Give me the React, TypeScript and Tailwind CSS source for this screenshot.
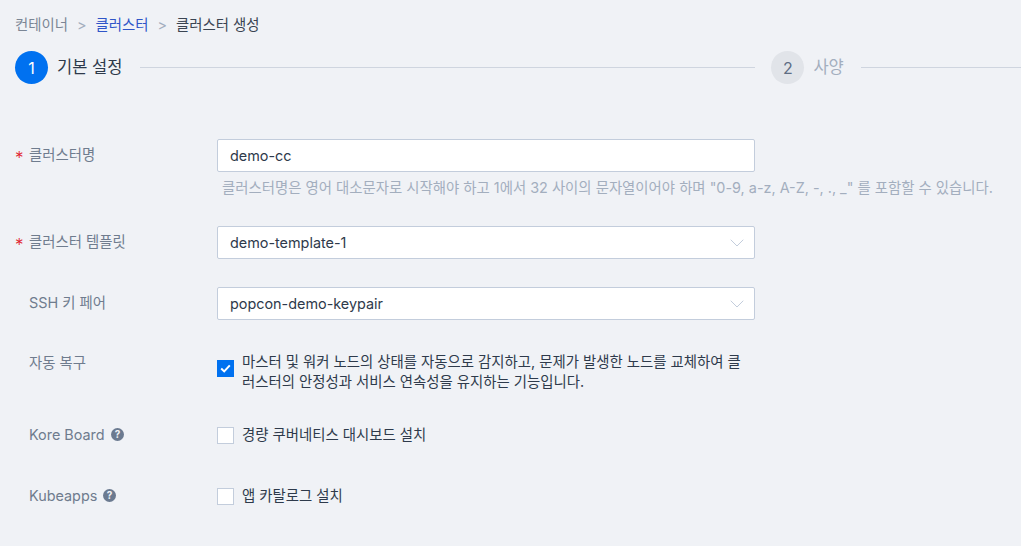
import { ChevronDown } from 'lucide-react';

const font = '[font-family:Inter,"Noto_Sans_CJK_KR",sans-serif]';

function HelpIcon() {
  return (
    <svg width="13" height="13" viewBox="0 0 13 13" className="shrink-0 -mt-[1px]">
      <circle cx="6.5" cy="6.5" r="6.5" fill="#6b7a90" />
      <text x="6.5" y="10" textAnchor="middle" fontSize="10" fontWeight="700" fill="#f0f2f6" fontFamily="Inter">
        ?
      </text>
    </svg>
  );
}

function Required() {
  return <span className="absolute left-[15px] top-[9px] text-[17px] font-light leading-[20px] text-[#e0202c]">*</span>;
}

function Select({ value }: { value: string }) {
  return (
    <div className="w-[538px] h-[33px] flex items-center justify-between pl-[12px] pr-[5px] bg-white border border-[#c3cddc] rounded-[2px] text-[14.4px] text-[#2e3a4b]">
      <span>{value}</span>
      <ChevronDown size={24} strokeWidth={1} className="text-[#c3cddc]" />
    </div>
  );
}

function Check({ checked }: { checked?: boolean }) {
  if (checked) {
    return (
      <span className="w-[17px] h-[17px] shrink-0 flex items-center justify-center bg-[#0071f0]">
        <svg width="11" height="9" viewBox="0 0 11 9">
          <path d="M1.2 4.6 L4.2 7.4 L9.8 1.4" fill="none" stroke="#fff" strokeWidth="2" />
        </svg>
      </span>
    );
  }
  return <span className="w-[17px] h-[17px] shrink-0 bg-white border border-[#c3cddc]" />;
}

export default function App() {
  return (
    <div className={`w-[1021px] h-[546px] overflow-hidden bg-[#f0f2f6] ${font}`}>
      {/* Breadcrumb */}
      <div className="flex items-center h-[20px] mt-[15px] ml-[15px] text-[14.4px] leading-[20px]">
        <span className="text-[#7b8695]">컨테이너</span>
        <span className="mx-[9px] text-[#a3aebe]">&gt;</span>
        <span className="text-[#2f55c8]">클러스터</span>
        <span className="mx-[9px] text-[#a3aebe]">&gt;</span>
        <span className="text-[#3a4452]">클러스터 생성</span>
      </div>

      {/* Steps */}
      <div className="flex items-center h-[33px] mt-[16px] pl-[15px]">
        <span className="w-[33px] h-[33px] rounded-full bg-[#0071f0] text-white flex items-center justify-center text-[16px]">1</span>
        <span className="ml-[9px] text-[16.5px] text-[#2e3a4b]">기본 설정</span>
        <span className="ml-[18px] w-[615px] h-px bg-[#cfd5df]" />
        <span className="ml-[16px] w-[33px] h-[33px] rounded-full bg-[#e1e4e9] text-[#5e6d84] flex items-center justify-center text-[16px]">2</span>
        <span className="ml-[9px] text-[16.5px] text-[#a3aebe]">사양</span>
        <span className="ml-[17px] flex-1 h-px bg-[#cfd5df]" />
      </div>

      {/* Form */}
      <div className="mt-[55px] text-[14.4px]">
        <div className="relative flex">
          <Required />
          <label className="w-[217px] pl-[29px] pt-[5px] text-[#6f7c8e]">클러스터명</label>
          <div>
            <div className="w-[538px] h-[33px] flex items-center pl-[12px] bg-white border border-[#c3cddc] rounded-[2px] text-[#2e3a4b]">demo-cc</div>
            <p className="mt-[6px] ml-[5px] h-[20px] leading-[20px] text-[14.4px] text-[#a3aebe] whitespace-nowrap">
              클러스터명은 영어 대소문자로 시작해야 하고 1에서 32 사이의 문자열이어야 하며 "0-9, a-z, A-Z, -, ., _" 를 포함할 수 있습니다.
            </p>
          </div>
        </div>

        <div className="relative flex mt-[28px]">
          <Required />
          <label className="w-[217px] pl-[29px] pt-[5px] text-[#6f7c8e]">클러스터 템플릿</label>
          <Select value="demo-template-1" />
        </div>

        <div className="flex mt-[28px]">
          <label className="w-[217px] pl-[29px] pt-[5px] text-[#6f7c8e]">SSH 키 페어</label>
          <Select value="popcon-demo-keypair" />
        </div>

        <div className="flex mt-[32px]">
          <label className="w-[217px] pl-[29px] text-[#6f7c8e]">자동 복구</label>
          <div className="flex w-[538px]">
            <span className="mt-[8px]">
              <Check checked />
            </span>
            <p className="ml-[8px] w-[506px] leading-[20px] text-[#2e3a4b]">
              마스터 및 워커 노드의 상태를 자동으로 감지하고, 문제가 발생한 노드를 교체하여 클러스터의 안정성과 서비스 연속성을 유지하는 기능입니다.
            </p>
          </div>
        </div>

        <div className="flex items-center mt-[33px] h-[20px]">
          <label className="w-[217px] pl-[29px] flex items-center gap-[6px] text-[#6f7c8e]">
            Kore Board <HelpIcon />
          </label>
          <Check />
          <span className="ml-[8px] text-[#2e3a4b]">경량 쿠버네티스 대시보드 설치</span>
        </div>

        <div className="flex items-center mt-[41px] h-[20px]">
          <label className="w-[217px] pl-[29px] flex items-center gap-[6px] text-[#6f7c8e]">
            Kubeapps <HelpIcon />
          </label>
          <Check />
          <span className="ml-[8px] text-[#2e3a4b]">앱 카탈로그 설치</span>
        </div>
      </div>
    </div>
  );
}
